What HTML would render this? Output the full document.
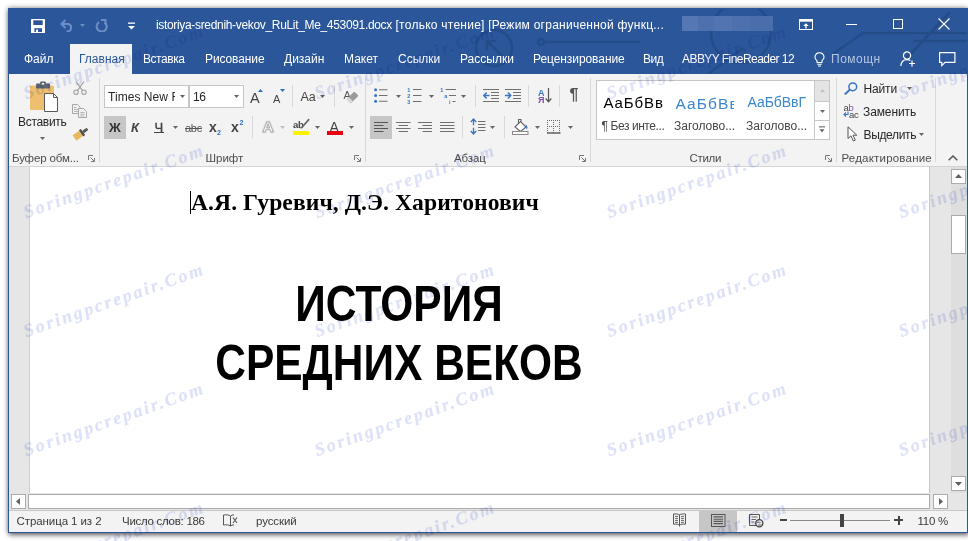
<!DOCTYPE html>
<html lang="ru">
<head>
<meta charset="utf-8">
<title>Word</title>
<style>
*{box-sizing:border-box;margin:0;padding:0}
html,body{width:968px;height:541px;overflow:hidden;background:#fff}
body{font-family:"Liberation Sans",sans-serif;position:relative}
.r{position:absolute;display:block}
.t{position:absolute;white-space:nowrap}
.h1{font-size:49.2px;line-height:56px;font-weight:bold;color:#000;transform:scaleX(0.8635);transform-origin:50% 50%}
.wm{position:absolute;white-space:nowrap;font-family:"Liberation Serif",serif;font-style:italic;font-weight:bold;font-size:18px;line-height:24px;letter-spacing:2.25px;color:rgb(222,226,248);text-shadow:0 0 1px rgb(236,238,251);mix-blend-mode:multiply;transform:rotate(-19.4deg);transform-origin:0 100%;z-index:4;pointer-events:none}
#shadow{position:absolute;left:8px;top:8px;width:960px;height:525px;background:#fff;box-shadow:1px 2px 5px rgba(0,0,0,.5),0 0 5px rgba(0,0,0,.38)}
</style>
</head>
<body>
<div id="shadow"></div>
<div class="r" style="left:8px;top:8px;width:960px;height:66px;background:#2b579a;"></div>
<div class="r" style="left:9px;top:74px;width:958px;height:92px;background:#f3f3f3;"></div>
<div class="r" style="left:9px;top:166px;width:958px;height:1px;background:#d4d4d4;"></div>
<div class="r" style="left:9px;top:167px;width:958px;height:326px;background:#e6e6e6;"></div>
<div class="r" style="left:30px;top:167px;width:899px;height:326px;background:#fff;"></div>
<div class="r" style="left:29px;top:167px;width:1px;height:326px;background:#d0d0d0;"></div>
<div class="r" style="left:929px;top:167px;width:1px;height:326px;background:#c8c8c8;"></div>
<div class="r" style="left:951px;top:167px;width:16px;height:326px;background:#dedede;"></div>
<div class="r" style="left:9px;top:493px;width:958px;height:17px;background:#e6e6e6;"></div>
<div class="r" style="left:9px;top:510px;width:958px;height:1px;background:#c8c8c8;"></div>
<div class="r" style="left:9px;top:511px;width:958px;height:21px;background:#f3f3f3;"></div>
<svg class="r" style="left:8px;top:8px;" width="960" height="66" viewBox="0 0 960 66"><g fill="none" stroke="#244c89" stroke-width="2.6"><circle cx="486" cy="40" r="18"/><path d="M495 49L479 33M479 42V33H488"/><circle cx="533" cy="34" r="3"/><path d="M536 34H632"/><path d="M825 46L855 25H960"/><path d="M897 52L942 4"/><path d="M905 33H960"/><circle cx="733" cy="25" r="30"/><path d="M700 66L735 40"/></g></svg>
<svg class="r" style="left:31px;top:19px;" width="14" height="14" viewBox="0 0 14 14"><rect x="0" y="0" width="14" height="14" rx="0.6" fill="#fff"/><rect x="2.3" y="1.3" width="9.4" height="4.700" fill="#2b579a"/><rect x="3.4" y="9.200" width="7.6" height="3.800" fill="#2b579a"/><rect x="5" y="10.600" width="2.1" height="2.400" fill="#fff"/></svg>
<svg class="r" style="left:60px;top:19px;" width="14" height="13" viewBox="0 0 14 13"><path d="M5.5 1L1.5 5L5.5 9" fill="none" stroke="#6c8cc2" stroke-width="2.1"/><path d="M2 5H8.5A4 4 0 0 1 8.5 12.5H6.5" fill="none" stroke="#6c8cc2" stroke-width="2.1"/></svg>
<svg class="r" style="left:80px;top:24px;" width="5" height="3" viewBox="0 0 5 3"><path d="M0 0H5L2.5 3Z" fill="#6c8cc2"/></svg>
<svg class="r" style="left:95px;top:19px;" width="13" height="13" viewBox="0 0 13 13"><path d="M4.2 3.2A5 5 0 1 0 9.5 3.4" fill="none" stroke="#6c8cc2" stroke-width="2.1"/><path d="M6 1H10.5V5.5" fill="none" stroke="#6c8cc2" stroke-width="2.1"/></svg>
<svg class="r" style="left:128px;top:22px;" width="7" height="8" viewBox="0 0 7 8"><rect x="0" y="0.5" width="7" height="1.3" fill="#fff"/><path d="M0 4H7L3.5 7.5Z" fill="#fff"/></svg>
<div class="t " style="left:156px;top:18.34px;font-size:12px;line-height:15px;color:#fff;letter-spacing:0.25px"><span style="letter-spacing:-0.33px">istoriya-srednih-vekov_RuLit_Me_453091.docx</span> [только чтение] [Режим ограниченной функц...</div>
<div class="r" style="left:682px;top:16px;width:91px;height:15px;background:#4d70ae;"></div>
<div class="r" style="left:682px;top:16px;width:16px;height:15px;background:#5577b3;"></div>
<div class="r" style="left:714px;top:16px;width:18px;height:15px;background:#5274b1;"></div>
<div class="r" style="left:750px;top:16px;width:23px;height:15px;background:#4a6dab;"></div>
<svg class="r" style="left:799px;top:19px;" width="14" height="11" viewBox="0 0 14 11"><rect x="0.5" y="0.5" width="13" height="10" fill="none" stroke="#fff"/><rect x="0.5" y="0.5" width="13" height="2.2" fill="#fff"/><path d="M7 4.2L4.2 7H6.3V9.5H7.7V7H9.8Z" fill="#fff"/></svg>
<div class="r" style="left:846px;top:24px;width:11px;height:1px;background:#fff;"></div>
<div class="r" style="left:893px;top:19px;width:10px;height:10px;background:transparent;border:1px solid #fff"></div>
<svg class="r" style="left:938px;top:18px;" width="12" height="12" viewBox="0 0 12 12"><path d="M0.5 0.5L11.5 11.5M11.5 0.5L0.5 11.5" stroke="#fff" stroke-width="1.1"/></svg>
<div class="r" style="left:70px;top:44px;width:62px;height:30px;background:#f3f3f3;"></div>
<div class="t " style="left:24px;top:52.34px;font-size:12px;line-height:15px;color:#fff;letter-spacing:0px">Файл</div>
<div class="t " style="left:143px;top:52.34px;font-size:12px;line-height:15px;color:#fff;letter-spacing:-0.45px">Вставка</div>
<div class="t " style="left:205px;top:52.34px;font-size:12px;line-height:15px;color:#fff;letter-spacing:-0.1px">Рисование</div>
<div class="t " style="left:284px;top:52.34px;font-size:12px;line-height:15px;color:#fff;letter-spacing:0px">Дизайн</div>
<div class="t " style="left:344px;top:52.34px;font-size:12px;line-height:15px;color:#fff;letter-spacing:0px">Макет</div>
<div class="t " style="left:398px;top:52.34px;font-size:12px;line-height:15px;color:#fff;letter-spacing:0px">Ссылки</div>
<div class="t " style="left:460px;top:52.34px;font-size:12px;line-height:15px;color:#fff;letter-spacing:0px">Рассылки</div>
<div class="t " style="left:533px;top:52.34px;font-size:12px;line-height:15px;color:#fff;letter-spacing:-0.07px">Рецензирование</div>
<div class="t " style="left:643px;top:52.34px;font-size:12px;line-height:15px;color:#fff;letter-spacing:-0.5px">Вид</div>
<div class="t " style="left:79px;top:52.34px;font-size:12px;line-height:15px;color:#2b579a;">Главная</div>
<div class="t " style="left:682px;top:52.34px;font-size:12px;line-height:15px;color:#fff;letter-spacing:-0.55px">ABBYY FineReader 12</div>
<div class="t " style="left:831px;top:52.34px;font-size:12px;line-height:15px;color:#b4c5e3;letter-spacing:0.5px">Помощн</div>
<svg class="r" style="left:814px;top:52px;" width="11" height="15" viewBox="0 0 11 15"><path d="M5.5 0.7A4.3 4.3 0 0 0 3 8.6V10.5H8V8.6A4.3 4.3 0 0 0 5.5 0.7Z" fill="none" stroke="#fff" stroke-width="1.1"/><path d="M3.3 12.3H7.7M4 14H7" stroke="#fff" stroke-width="1.1"/></svg>
<svg class="r" style="left:900px;top:51px;" width="16" height="16" viewBox="0 0 16 16"><circle cx="7" cy="4.5" r="3.6" fill="none" stroke="#fff" stroke-width="1.2"/><path d="M0.8 15C1.2 10.5 4 8.6 7 8.6C8.3 8.6 9.4 8.9 10.3 9.5" fill="none" stroke="#fff" stroke-width="1.2"/><path d="M12 9.5V15.5M9 12.5H15" stroke="#fff" stroke-width="1.2"/></svg>
<svg class="r" style="left:939px;top:52px;" width="17" height="15" viewBox="0 0 17 15"><path d="M0.6 0.6H15.9V10.4H6L2.8 13.6V10.4H0.6Z" fill="none" stroke="#fff" stroke-width="1.2"/></svg>
<svg class="r" style="left:29px;top:81px;" width="30" height="32" viewBox="0 0 30 32"><rect x="1" y="4.5" width="24" height="24.5" rx="1.5" fill="#eebf6f"/>
<rect x="7" y="2.6" width="14" height="4.8" rx="0.8" fill="#5f6670"/><rect x="11" y="0.6" width="6" height="4" rx="1.2" fill="#5f6670"/><rect x="12.8" y="2" width="2.4" height="1.6" fill="#f3f3f3"/>
<path d="M15.5 12.5H24.5L28.5 16.5V30.5H15.5Z" fill="#fff" stroke="#5a5a5a" stroke-width="1"/><path d="M24.5 12.5V16.5H28.5" fill="none" stroke="#5a5a5a" stroke-width="1"/></svg>
<div class="t " style="left:18px;top:115.34px;font-size:12px;line-height:15px;color:#262626;letter-spacing:-0.3px">Вставить</div>
<svg class="r" style="left:40px;top:137px;" width="5" height="3" viewBox="0 0 5 3"><path d="M0 0H5L2.5 3Z" fill="#666"/></svg>
<svg class="r" style="left:73px;top:81px;" width="14" height="14" viewBox="0 0 14 14"><path d="M3 0.5L9.6 9.6M11 0.5L4.4 9.6" stroke="#a0a0a0" stroke-width="1.2" fill="none"/><circle cx="3" cy="11.2" r="2.2" fill="none" stroke="#a0a0a0" stroke-width="1.1"/><circle cx="11" cy="11.2" r="2.2" fill="none" stroke="#a0a0a0" stroke-width="1.1"/></svg>
<svg class="r" style="left:72px;top:104px;" width="15" height="14" viewBox="0 0 15 14"><path d="M0.5 0.5H5.5L8 3V9.5H0.5Z" fill="#f3f3f3" stroke="#a8a8a8"/><path d="M2 3.5H4.5M2 5.5H6M2 7.5H6" stroke="#b0b0b0" stroke-width="0.9"/><path d="M6.5 4.5H11.5L14.5 7.5V13.5H6.5Z" fill="#f3f3f3" stroke="#a8a8a8"/><path d="M8.3 8.5H12.5M8.3 10.2H12.5M8.3 11.9H12.5" stroke="#b0b0b0" stroke-width="0.9"/></svg>
<svg class="r" style="left:72px;top:126px;" width="17" height="15" viewBox="0 0 17 15"><g transform="rotate(-35 8.5 7.5)"><rect x="1" y="4.5" width="8" height="6.5" fill="#eab75c"/><rect x="9" y="4" width="2.4" height="7.5" fill="#4d4d4d"/><rect x="11.4" y="6.2" width="5.6" height="3" rx="1" fill="#5a5a5a"/></g></svg>
<div class="t " style="left:12px;top:151.02px;font-size:11.5px;line-height:14px;color:#4d4d4d;letter-spacing:-0.15px">Буфер обм...</div>
<svg class="r" style="left:88px;top:155px;" width="7" height="7" viewBox="0 0 7 7"><path d="M0.5 5V0.5H5" fill="none" stroke="#777" stroke-width="1"/><path d="M2.5 2.5L6 6M6.5 3V6.5H3" fill="none" stroke="#777" stroke-width="1"/></svg>
<div class="r" style="left:99px;top:78px;width:1px;height:84px;background:#d8d8d8;"></div>
<div class="r" style="left:104px;top:85px;width:85px;height:23px;background:#fff;border:1px solid #c6c6c6"></div>
<div class="r" style="left:189px;top:85px;width:55px;height:23px;background:#fff;border:1px solid #c6c6c6"></div>
<div class="t" style="left:108px;top:90px;width:67px;overflow:hidden;font-size:12px;line-height:15px;color:#262626;letter-spacing:0.05px">Times New Roman</div>
<svg class="r" style="left:179.5px;top:95px;" width="5" height="3" viewBox="0 0 5 3"><path d="M0 0H5L2.5 3Z" fill="#666"/></svg>
<div class="t " style="left:193px;top:90.34px;font-size:12px;line-height:15px;color:#262626;letter-spacing:-0.4px">16</div>
<svg class="r" style="left:234px;top:95px;" width="5" height="3" viewBox="0 0 5 3"><path d="M0 0H5L2.5 3Z" fill="#666"/></svg>
<div class="r" style="left:104px;top:116px;width:22px;height:23px;background:#c6c6c6;"></div>
<div class="t " style="left:109px;top:119.50px;font-size:13px;line-height:16px;color:#333;font-weight:bold;letter-spacing:-0.2px">Ж</div>
<div class="t " style="left:131px;top:119.50px;font-size:13px;line-height:16px;color:#444;font-weight:bold;font-style:italic">К</div>
<div class="t " style="left:154.5px;top:119.50px;font-size:13px;line-height:16px;color:#444;-webkit-text-stroke:0.35px #444">Ч</div>
<div class="r" style="left:154px;top:132px;width:10px;height:1px;background:#444;"></div>
<svg class="r" style="left:173px;top:126px;" width="5" height="3" viewBox="0 0 5 3"><path d="M0 0H5L2.5 3Z" fill="#666"/></svg>
<div class="t " style="left:185px;top:121.19px;font-size:11px;line-height:14px;color:#555;text-decoration:line-through;letter-spacing:-0.3px">abc</div>
<div class="t " style="left:209px;top:118.15px;font-size:14px;line-height:18px;color:#444;font-weight:bold">x</div>
<div class="t " style="left:217px;top:128.07px;font-size:7px;line-height:9px;color:#2b6fc0;font-weight:bold">2</div>
<div class="t " style="left:231px;top:118.15px;font-size:14px;line-height:18px;color:#444;font-weight:bold">x</div>
<div class="t " style="left:239.5px;top:118.07px;font-size:7px;line-height:9px;color:#2b6fc0;font-weight:bold">2</div>
<div class="t " style="left:205.5px;top:151.02px;font-size:11.5px;line-height:14px;color:#4d4d4d;">Шрифт</div>
<div class="t " style="left:250px;top:88.98px;font-size:14.5px;line-height:18px;color:#444;">A</div>
<svg class="r" style="left:258px;top:89px;" width="5" height="3" viewBox="0 0 5 3"><path d="M0 3H5L2.5 0Z" fill="#2b6fc0"/></svg>
<div class="t " style="left:273px;top:92.19px;font-size:11px;line-height:14px;color:#444;">A</div>
<svg class="r" style="left:280px;top:89px;" width="5" height="3" viewBox="0 0 5 3"><path d="M0 0H5L2.5 3Z" fill="#2b6fc0"/></svg>
<div class="r" style="left:292px;top:85px;width:1px;height:22px;background:#d8d8d8;"></div>
<div class="t " style="left:300.5px;top:88.67px;font-size:12.5px;line-height:16px;color:#444;letter-spacing:-0.2px">Aa</div>
<svg class="r" style="left:320px;top:95px;" width="5" height="3" viewBox="0 0 5 3"><path d="M0 0H5L2.5 3Z" fill="#666"/></svg>
<div class="r" style="left:334px;top:85px;width:1px;height:22px;background:#d8d8d8;"></div>
<div class="t " style="left:343.5px;top:88.19px;font-size:11px;line-height:14px;color:#555;">A</div>
<svg class="r" style="left:346px;top:91px;" width="13" height="13" viewBox="0 0 13 13"><g transform="rotate(-45 6.5 6.5)"><rect x="1" y="3.5" width="11" height="6" rx="1" fill="#9a9a9a"/><rect x="1" y="3.5" width="3.2" height="6" fill="#d9d9d9"/></g></svg>
<div class="r" style="left:365px;top:78px;width:1px;height:84px;background:#d8d8d8;"></div>
<div class="r" style="left:252px;top:116px;width:1px;height:22px;background:#d8d8d8;"></div>
<svg class="r" style="left:258px;top:116px;" width="20" height="20" viewBox="0 0 20 20"><text x="10" y="16" text-anchor="middle" font-family="Liberation Sans, sans-serif" font-size="15.5" font-weight="bold" fill="#fff" stroke="#e2e2e2" stroke-width="2.8" stroke-linejoin="round">A</text><text x="10" y="16" text-anchor="middle" font-family="Liberation Sans, sans-serif" font-size="15.5" font-weight="bold" fill="#fff" stroke="#a9a9a9" stroke-width="0.9" stroke-linejoin="round">A</text></svg>
<svg class="r" style="left:280px;top:126px;" width="5" height="3" viewBox="0 0 5 3"><path d="M0 0H5L2.5 3Z" fill="#c0c0c0"/></svg>
<div class="t " style="left:293px;top:118.71px;font-size:9.5px;line-height:12px;color:#444;font-weight:bold;letter-spacing:-0.3px">ab</div>
<svg class="r" style="left:299px;top:118px;" width="11" height="12" viewBox="0 0 11 12"><path d="M9.5 0.5L10.8 1.8L3.5 10L1.5 11L2.3 9Z" fill="#666"/></svg>
<div class="r" style="left:293px;top:131px;width:16px;height:4px;background:#fff200;"></div>
<svg class="r" style="left:315px;top:126px;" width="5" height="3" viewBox="0 0 5 3"><path d="M0 0H5L2.5 3Z" fill="#666"/></svg>
<div class="t " style="left:329.5px;top:117.65px;font-size:14px;line-height:18px;color:#444;">A</div>
<div class="r" style="left:327px;top:131px;width:16px;height:4px;background:#e8000f;"></div>
<svg class="r" style="left:349px;top:126px;" width="5" height="3" viewBox="0 0 5 3"><path d="M0 0H5L2.5 3Z" fill="#666"/></svg>
<svg class="r" style="left:354px;top:155px;" width="7" height="7" viewBox="0 0 7 7"><path d="M0.5 5V0.5H5" fill="none" stroke="#777" stroke-width="1"/><path d="M2.5 2.5L6 6M6.5 3V6.5H3" fill="none" stroke="#777" stroke-width="1"/></svg>
<svg class="r" style="left:374px;top:88px;" width="14" height="15" viewBox="0 0 14 15"><circle cx="1.6" cy="1.8" r="1.5" fill="#3a74c4"/><circle cx="1.6" cy="7.5" r="1.5" fill="#3a74c4"/><circle cx="1.6" cy="13.2" r="1.5" fill="#3a74c4"/><path d="M5 1.8H13.5M5 7.5H13.5M5 13.2H13.5" stroke="#707070" stroke-width="1.1"/></svg>
<svg class="r" style="left:395.5px;top:95px;" width="5" height="3" viewBox="0 0 5 3"><path d="M0 0H5L2.5 3Z" fill="#666"/></svg>
<svg class="r" style="left:407px;top:87px;" width="15" height="17" viewBox="0 0 15 17"><path d="M6 2.5H14.5M6 8.5H14.5M6 14.5H14.5" stroke="#707070" stroke-width="1.1"/><text x="0.3" y="4.8" font-family="Liberation Sans, sans-serif" font-size="5.5" font-weight="bold" fill="#3a74c4">1</text><text x="0.3" y="10.8" font-family="Liberation Sans, sans-serif" font-size="5.5" font-weight="bold" fill="#3a74c4">2</text><text x="0.3" y="16.8" font-family="Liberation Sans, sans-serif" font-size="5.5" font-weight="bold" fill="#3a74c4">3</text></svg>
<svg class="r" style="left:429px;top:95px;" width="5" height="3" viewBox="0 0 5 3"><path d="M0 0H5L2.5 3Z" fill="#666"/></svg>
<svg class="r" style="left:440px;top:87px;" width="17" height="17" viewBox="0 0 17 17"><path d="M5.5 2.5H16M9 8.5H16M12.5 14.5H15.5" stroke="#707070" stroke-width="1.1"/><text x="0.3" y="4.8" font-family="Liberation Sans, sans-serif" font-size="5.5" font-weight="bold" fill="#3a74c4">1</text><text x="4.2" y="10.8" font-family="Liberation Sans, sans-serif" font-size="5.5" font-weight="bold" fill="#3a74c4">a</text><text x="9" y="16.8" font-family="Liberation Sans, sans-serif" font-size="5.5" font-weight="bold" fill="#3a74c4">i</text></svg>
<svg class="r" style="left:461px;top:95px;" width="5" height="3" viewBox="0 0 5 3"><path d="M0 0H5L2.5 3Z" fill="#666"/></svg>
<div class="r" style="left:475px;top:85px;width:1px;height:22px;background:#d8d8d8;"></div>
<svg class="r" style="left:483px;top:89px;" width="16" height="13" viewBox="0 0 16 13"><path d="M0 0.5H16M0 12.5H16M8 3.5H16M8 6.5H16M8 9.5H16" stroke="#707070" stroke-width="1.1"/><path d="M6.5 6.5H1M3.6 3.6L0.8 6.5L3.6 9.4" fill="none" stroke="#3a74c4" stroke-width="1.5"/></svg>
<svg class="r" style="left:505px;top:89px;" width="16" height="13" viewBox="0 0 16 13"><path d="M0 0.5H16M0 12.5H16M8 3.5H16M8 6.5H16M8 9.5H16" stroke="#707070" stroke-width="1.1"/><path d="M0 6.5H5.5M2.9 3.6L5.7 6.5L2.9 9.4" fill="none" stroke="#3a74c4" stroke-width="1.5"/></svg>
<div class="r" style="left:528px;top:85px;width:1px;height:22px;background:#d8d8d8;"></div>
<div class="t " style="left:538px;top:87.88px;font-size:9px;line-height:11px;color:#3a74c4;font-weight:bold">А</div>
<div class="t " style="left:538px;top:95.38px;font-size:9px;line-height:11px;color:#7b4fa8;font-weight:bold">Я</div>
<svg class="r" style="left:545px;top:88px;" width="7" height="15" viewBox="0 0 7 15"><path d="M3.5 0V13.5M0.7 10.5L3.5 13.8L6.3 10.5" fill="none" stroke="#555" stroke-width="1.2"/></svg>
<div class="r" style="left:559px;top:85px;width:1px;height:22px;background:#d8d8d8;"></div>
<div class="t " style="left:569.5px;top:84.96px;font-size:16px;line-height:20px;color:#555;font-weight:bold;letter-spacing:0">¶</div>
<div class="r" style="left:590px;top:78px;width:1px;height:84px;background:#d8d8d8;"></div>
<div class="r" style="left:370px;top:116px;width:22px;height:23px;background:#c6c6c6;"></div>
<svg class="r" style="left:374px;top:122px;" width="15" height="11" viewBox="0 0 15 11"><path d="M0 0.5H14M0 3.5H9.5M0 6.5H14M0 9.5H9.5" stroke="#555" stroke-width="1.1"/></svg>
<svg class="r" style="left:395.5px;top:122px;" width="15" height="11" viewBox="0 0 15 11"><path d="M0 0.5H14.5M2.5 3.5H12M0 6.5H14.5M2.5 9.5H12" stroke="#707070" stroke-width="1.1"/></svg>
<svg class="r" style="left:418px;top:122px;" width="15" height="11" viewBox="0 0 15 11"><path d="M0 0.5H14M4.5 3.5H14M0 6.5H14M4.5 9.5H14" stroke="#707070" stroke-width="1.1"/></svg>
<svg class="r" style="left:440px;top:122px;" width="15" height="11" viewBox="0 0 15 11"><path d="M0 0.5H14.5M0 3.5H14.5M0 6.5H14.5M0 9.5H14.5" stroke="#707070" stroke-width="1.1"/></svg>
<div class="r" style="left:462px;top:116px;width:1px;height:22px;background:#d8d8d8;"></div>
<svg class="r" style="left:470px;top:118px;" width="16" height="17" viewBox="0 0 16 17"><path d="M3.500 1V7.300M3.500 9.700V16M0.800 4L3.500 1L6.200 4M0.800 13L3.500 16L6.200 13" fill="none" stroke="#3a74c4" stroke-width="1.300"/><path d="M8 3.500H15.500M8 6.500H15.500M8 9.500H15.500M8 12.500H15.500" stroke="#707070" stroke-width="1.100"/></svg>
<svg class="r" style="left:490px;top:126px;" width="5" height="3" viewBox="0 0 5 3"><path d="M0 0H5L2.5 3Z" fill="#666"/></svg>
<div class="r" style="left:504px;top:116px;width:1px;height:22px;background:#d8d8d8;"></div>
<svg class="r" style="left:512px;top:118px;" width="17" height="17" viewBox="0 0 17 17"><path d="M3 9L8.5 3.5L14 9L8.5 13.5Z" fill="#fff" stroke="#666" stroke-width="1.1"/><path d="M6.5 5.5V1.5H9V4" fill="none" stroke="#666" stroke-width="1.1"/><path d="M13.5 6.5C15.5 7.5 15.8 9.5 15 11.5C14 10.5 13.8 9 13.5 6.500Z" fill="#3a74c4"/><rect x="0.5" y="13.5" width="15.5" height="3" fill="#fff" stroke="#8a8a8a" stroke-width="1"/></svg>
<svg class="r" style="left:534.5px;top:126px;" width="5" height="3" viewBox="0 0 5 3"><path d="M0 0H5L2.5 3Z" fill="#666"/></svg>
<svg class="r" style="left:547px;top:120px;" width="14" height="14" viewBox="0 0 14 14"><path d="M0 0.5H14M0 6.500H14M0.500 0V13M6.500 0V13M12.500 0V13" fill="none" stroke="#6a6a6a" stroke-width="1" stroke-dasharray="1 1"/><path d="M0 13H13.500" stroke="#555" stroke-width="1.400"/></svg>
<svg class="r" style="left:568px;top:126px;" width="5" height="3" viewBox="0 0 5 3"><path d="M0 0H5L2.5 3Z" fill="#666"/></svg>
<div class="t " style="left:454px;top:151.02px;font-size:11.5px;line-height:14px;color:#4d4d4d;letter-spacing:-0.1px">Абзац</div>
<svg class="r" style="left:579px;top:155px;" width="7" height="7" viewBox="0 0 7 7"><path d="M0.5 5V0.5H5" fill="none" stroke="#777" stroke-width="1"/><path d="M2.5 2.5L6 6M6.5 3V6.5H3" fill="none" stroke="#777" stroke-width="1"/></svg>
<div class="r" style="left:596px;top:80px;width:234px;height:60px;background:#fff;border:1px solid #c6c6c6"></div>
<div class="r" style="left:815px;top:81px;width:14px;height:20px;background:#e4e4e4;"></div>
<div class="r" style="left:814px;top:81px;width:1px;height:58px;background:#c6c6c6;"></div>
<div class="r" style="left:815px;top:101px;width:14px;height:1px;background:#c6c6c6;"></div>
<div class="r" style="left:815px;top:120px;width:14px;height:1px;background:#c6c6c6;"></div>
<svg class="r" style="left:819.5px;top:89px;" width="5" height="3" viewBox="0 0 5 3"><path d="M0 3H5L2.5 0Z" fill="#c0c0c0"/></svg>
<svg class="r" style="left:819.5px;top:110px;" width="5" height="3" viewBox="0 0 5 3"><path d="M0 0H5L2.5 3Z" fill="#666"/></svg>
<svg class="r" style="left:819px;top:126px;" width="6" height="7" viewBox="0 0 6 7"><rect x="0" y="0.3" width="6" height="1.1" fill="#666"/><path d="M0.5 3.2H5.5L3 6.4Z" fill="#666"/></svg>
<div class="t " style="left:603.5px;top:92.80px;font-size:15px;line-height:19px;color:#000;letter-spacing:0.9px">АаБбВв</div>
<div class="t " style="left:601.5px;top:119.34px;font-size:12px;line-height:15px;color:#444;letter-spacing:-0.42px">¶ Без инте...</div>
<div class="t" style="left:675.5px;top:89.5px;width:58.5px;height:28px;overflow:hidden;font-size:15.5px;line-height:28px;color:#3a86cf;letter-spacing:1.1px">АаБбВв</div>
<div class="t" style="left:674px;top:119.34px;width:62px;overflow:hidden;font-size:12px;line-height:15px;color:#444;">Заголово...</div>
<div class="t " style="left:747.5px;top:92.65px;font-size:14px;line-height:18px;color:#3a86cf;letter-spacing:-0.05px">АаБбВвГ</div>
<div class="t " style="left:746px;top:119.34px;font-size:12px;line-height:15px;color:#444;">Заголово...</div>
<div class="t " style="left:689.5px;top:151.02px;font-size:11.5px;line-height:14px;color:#4d4d4d;letter-spacing:-0.3px">Стили</div>
<svg class="r" style="left:825px;top:155px;" width="7" height="7" viewBox="0 0 7 7"><path d="M0.5 5V0.5H5" fill="none" stroke="#777" stroke-width="1"/><path d="M2.5 2.5L6 6M6.5 3V6.5H3" fill="none" stroke="#777" stroke-width="1"/></svg>
<div class="r" style="left:836px;top:78px;width:1px;height:84px;background:#d8d8d8;"></div>
<svg class="r" style="left:844px;top:82px;" width="14" height="13" viewBox="0 0 14 13"><circle cx="8.8" cy="4.8" r="3.9" fill="none" stroke="#3a74c4" stroke-width="1.5"/><path d="M6 7.6L0.8 12.4" stroke="#3a74c4" stroke-width="2"/></svg>
<div class="t " style="left:863.5px;top:81.84px;font-size:12px;line-height:15px;color:#262626;letter-spacing:-0.15px">Найти</div>
<svg class="r" style="left:907px;top:87px;" width="5" height="3" viewBox="0 0 5 3"><path d="M0 0H5L2.5 3Z" fill="#666"/></svg>
<div class="t " style="left:843.5px;top:102.21px;font-size:9.5px;line-height:12px;color:#444;">a</div>
<div class="t " style="left:848.5px;top:102.21px;font-size:9.5px;line-height:12px;color:#7b4fa8;">b</div>
<div class="t " style="left:849px;top:109.21px;font-size:9.5px;line-height:12px;color:#444;letter-spacing:-0.2px">ac</div>
<svg class="r" style="left:843px;top:111px;" width="6" height="6" viewBox="0 0 6 6"><path d="M5 0.5V3.5H1.2M3 1.5L1 3.5L3 5.5" fill="none" stroke="#3a74c4" stroke-width="1.1"/></svg>
<div class="t " style="left:863px;top:104.84px;font-size:12px;line-height:15px;color:#262626;letter-spacing:-0.1px">Заменить</div>
<svg class="r" style="left:847px;top:126px;" width="11" height="16" viewBox="0 0 11 16"><path d="M1 0.8V12.5L4 9.8L6.3 15L8.3 14.1L6 9.2H9.8Z" fill="#fff" stroke="#555" stroke-width="1"/></svg>
<div class="t " style="left:863.5px;top:127.84px;font-size:12px;line-height:15px;color:#262626;letter-spacing:-0.35px">Выделить</div>
<svg class="r" style="left:919px;top:133px;" width="5" height="3" viewBox="0 0 5 3"><path d="M0 0H5L2.5 3Z" fill="#666"/></svg>
<div class="t " style="left:841.5px;top:151.02px;font-size:11.5px;line-height:14px;color:#4d4d4d;letter-spacing:0.2px">Редактирование</div>
<div class="r" style="left:935px;top:78px;width:1px;height:84px;background:#d8d8d8;"></div>
<svg class="r" style="left:948px;top:155px;" width="10" height="6" viewBox="0 0 10 6"><path d="M0.7 5.3L5 1L9.3 5.3" fill="none" stroke="#555" stroke-width="1.5"/></svg>
<div class="r" style="left:190px;top:191px;width:1px;height:23px;background:#000;"></div>
<div class="t" style="left:191px;top:188px;font-family:'Liberation Serif',serif;font-weight:bold;font-size:23.6px;line-height:28px;letter-spacing:0.07px;color:#000">А.Я. Гуревич, Д.Э. Харитонович</div>
<div class="t h1" style="left:99px;top:275.85px;width:600px;text-align:center;">ИСТОРИЯ</div>
<div class="t h1" style="left:99.4px;top:334.85px;width:600px;text-align:center;">СРЕДНИХ ВЕКОВ</div>
<div class="r" style="left:951px;top:169px;width:15px;height:15px;background:#fff;border:1px solid #ababab"></div>
<svg class="r" style="left:955px;top:174px;" width="7" height="4" viewBox="0 0 7 4"><path d="M0 4H7L3.5 0Z" fill="#606060"/></svg>
<div class="r" style="left:951px;top:215px;width:15px;height:39px;background:#fff;border:1px solid #ababab"></div>
<div class="r" style="left:951px;top:476px;width:15px;height:15px;background:#fff;border:1px solid #ababab"></div>
<svg class="r" style="left:955px;top:482px;" width="7" height="4" viewBox="0 0 7 4"><path d="M0 0H7L3.5 4Z" fill="#606060"/></svg>
<div class="r" style="left:11px;top:494px;width:15px;height:15px;background:#fff;border:1px solid #ababab"></div>
<svg class="r" style="left:16px;top:498px;" width="4" height="7" viewBox="0 0 4 7"><path d="M4 0V7L0 3.5Z" fill="#606060"/></svg>
<div class="r" style="left:933px;top:494px;width:15px;height:15px;background:#fff;border:1px solid #ababab"></div>
<svg class="r" style="left:939px;top:498px;" width="4" height="7" viewBox="0 0 4 7"><path d="M0 0V7L4 3.5Z" fill="#606060"/></svg>
<div class="r" style="left:28px;top:494px;width:902px;height:15px;background:#fff;border:1px solid #ababab"></div>
<div class="t " style="left:16.5px;top:514.02px;font-size:11.5px;line-height:14px;color:#3b3b3b;letter-spacing:-0.08px">Страница 1 из 2</div>
<div class="t " style="left:122px;top:514.02px;font-size:11.5px;line-height:14px;color:#3b3b3b;letter-spacing:-0.28px">Число слов: 186</div>
<svg class="r" style="left:223px;top:514px;" width="15" height="13" viewBox="0 0 15 13"><path d="M7.5 2C6 0.8 3 0.6 0.5 1V11C3 10.6 6 10.8 7.500 12V2" fill="none" stroke="#555" stroke-width="1"/><path d="M7.5 2C8.5 1.2 9.5 0.9 11 0.8M7.5 12C8.500 11.2 9.5 10.9 11 10.800" fill="none" stroke="#555" stroke-width="1"/><path d="M10 3.5L14 9M14 3.5L10 9" stroke="#555" stroke-width="1.1"/></svg>
<div class="t " style="left:256px;top:514.02px;font-size:11.5px;line-height:14px;color:#3b3b3b;letter-spacing:-0.1px">русский</div>
<svg class="r" style="left:673px;top:513px;" width="14" height="14" viewBox="0 0 14 14"><path d="M6.500 1.800C5 0.900 3 0.800 0.5 1V11.200C3 11 5 11.100 6.500 12M6.500 1.800V13.600M6.500 1.800C8 0.900 10 0.800 12.500 1V11.200C10 11 8 11.100 6.500 12" fill="none" stroke="#555" stroke-width="1"/><path d="M2 3.400H5M2 5.400H5M2 7.400H5M2 9.400H5M8 3.400H11M8 5.400H11M8 7.400H11M8 9.400H11" stroke="#666" stroke-width="1"/></svg>
<div class="r" style="left:699px;top:511px;width:38px;height:21px;background:#c6c6c6;"></div>
<svg class="r" style="left:711px;top:514px;" width="15" height="13" viewBox="0 0 15 13"><rect x="0.5" y="0.5" width="13.5" height="12" fill="#c6c6c6" stroke="#555"/><path d="M2.500 2.900H12M2.500 5.200H12M2.500 7.400H12M2.500 9.600H12" stroke="#5a5a5a" stroke-width="1.1"/></svg>
<svg class="r" style="left:749px;top:514px;" width="15" height="14" viewBox="0 0 15 14"><path d="M7 11.500H0.5V0.5H10.500V5" fill="none" stroke="#555"/><path d="M2.500 3H8.500M2.500 5.500H7M2.500 8H5.500" stroke="#666" stroke-width="1.1"/><circle cx="10.300" cy="9.300" r="3.600" fill="#e9e9e9" stroke="#444" stroke-width="1.300"/><path d="M8 8.200C9.500 7.600 10 9.500 11.500 8.500M9 11.500C10 10.500 11 11.500 12.500 10.500" fill="none" stroke="#555" stroke-width="0.9"/></svg>
<div class="r" style="left:780px;top:519px;width:7px;height:2px;background:#444;"></div>
<div class="r" style="left:790px;top:520px;width:100px;height:1px;background:#8a8a8a;"></div>
<div class="r" style="left:840px;top:514px;width:4px;height:13px;background:#444;"></div>
<div class="r" style="left:894px;top:519px;width:9px;height:2px;background:#444;"></div>
<div class="r" style="left:897.5px;top:515.5px;width:2px;height:9px;background:#444;"></div>
<div class="t " style="left:917.5px;top:514.02px;font-size:11.5px;line-height:14px;color:#3b3b3b;letter-spacing:-0.25px">110 %</div>
<div class="wm" style="left:27.6px;top:-38px">Soringpcrepair.Com</div>
<div class="wm" style="left:27.6px;top:81px">Soringpcrepair.Com</div>
<div class="wm" style="left:27.6px;top:200px">Soringpcrepair.Com</div>
<div class="wm" style="left:27.6px;top:319px">Soringpcrepair.Com</div>
<div class="wm" style="left:27.6px;top:438px">Soringpcrepair.Com</div>
<div class="wm" style="left:27.6px;top:557px">Soringpcrepair.Com</div>
<div class="wm" style="left:319.3px;top:-38px">Soringpcrepair.Com</div>
<div class="wm" style="left:319.3px;top:81px">Soringpcrepair.Com</div>
<div class="wm" style="left:319.3px;top:200px">Soringpcrepair.Com</div>
<div class="wm" style="left:319.3px;top:319px">Soringpcrepair.Com</div>
<div class="wm" style="left:319.3px;top:438px">Soringpcrepair.Com</div>
<div class="wm" style="left:319.3px;top:557px">Soringpcrepair.Com</div>
<div class="wm" style="left:611px;top:-38px">Soringpcrepair.Com</div>
<div class="wm" style="left:611px;top:81px">Soringpcrepair.Com</div>
<div class="wm" style="left:611px;top:200px">Soringpcrepair.Com</div>
<div class="wm" style="left:611px;top:319px">Soringpcrepair.Com</div>
<div class="wm" style="left:611px;top:438px">Soringpcrepair.Com</div>
<div class="wm" style="left:611px;top:557px">Soringpcrepair.Com</div>
<div class="wm" style="left:902.7px;top:-38px">Soringpcrepair.Com</div>
<div class="wm" style="left:902.7px;top:81px">Soringpcrepair.Com</div>
<div class="wm" style="left:902.7px;top:200px">Soringpcrepair.Com</div>
<div class="wm" style="left:902.7px;top:319px">Soringpcrepair.Com</div>
<div class="wm" style="left:902.7px;top:438px">Soringpcrepair.Com</div>
<div class="wm" style="left:902.7px;top:557px">Soringpcrepair.Com</div>
<div class="r" style="left:8px;top:8px;width:960px;height:525px;border:1px solid #2b579a;z-index:5"></div>
</body>
</html>
